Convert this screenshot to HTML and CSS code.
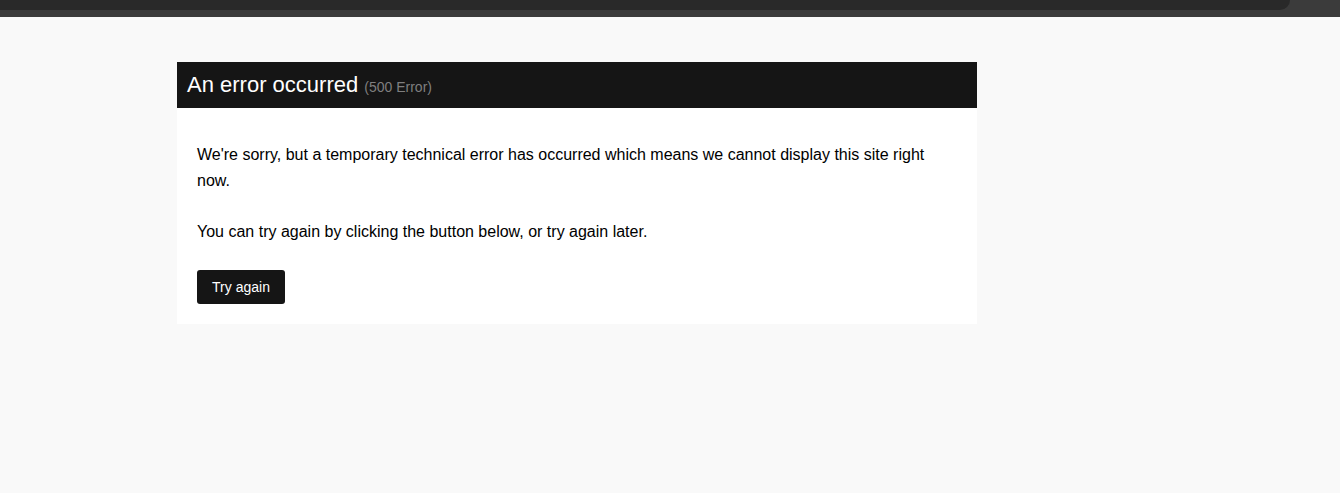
FILE: index.html
```html
<!DOCTYPE html>
<html>
<head>
<meta charset="utf-8">
<link rel="stylesheet" href="styles.css">
</head>
<body>
<div class="topbar"><div class="topbar-inner"></div></div>
<div class="card">
  <div class="card-head">
    <h1 class="title">An error occurred <span class="code">(500 Error)</span></h1>
  </div>
  <div class="card-body">
    <p class="msg">We're sorry, but a temporary technical error has occurred which means we cannot display this site right now.</p>
    <p class="msg msg-last">You can try again by clicking the button below, or try again later.</p>
    <button class="btn">Try again</button>
  </div>
</div>
</body>
</html>
```
FILE: styles.css
```css
html, body {
  margin: 0;
  padding: 0;
  background: #f9f9f9;
  font-family: "Liberation Sans", Arial, sans-serif;
}
.topbar {
  height: 17px;
  background: #3b3b3b;
}
.topbar-inner {
  width: 1290px;
  height: 10px;
  background: #292929;
  border-bottom-right-radius: 10px;
}
.card {
  width: 800px;
  margin: 45px 0 0 177px;
  background: #ffffff;
}
.card-head {
  height: 46px;
  background: #151515;
  display: flex;
  align-items: center;
  padding: 0 10px;
}
.title {
  margin: 0;
  font-size: 22px;
  font-weight: normal;
  color: #ffffff;
  line-height: 1;
}
.code {
  font-size: 14px;
  color: #7f7f7f;
}
.card-body {
  padding: 34px 20px 20px;
}
.msg {
  margin: 0 0 25px;
  font-size: 16px;
  line-height: 26px;
  color: #000000;
}
.msg-last {
  margin-bottom: 25px;
}
.btn {
  display: block;
  height: 34px;
  width: 88px;
  padding: 0;
  border: none;
  border-radius: 3px;
  background: #151515;
  color: #ffffff;
  font-family: "Liberation Sans", Arial, sans-serif;
  font-size: 14px;
}
```
